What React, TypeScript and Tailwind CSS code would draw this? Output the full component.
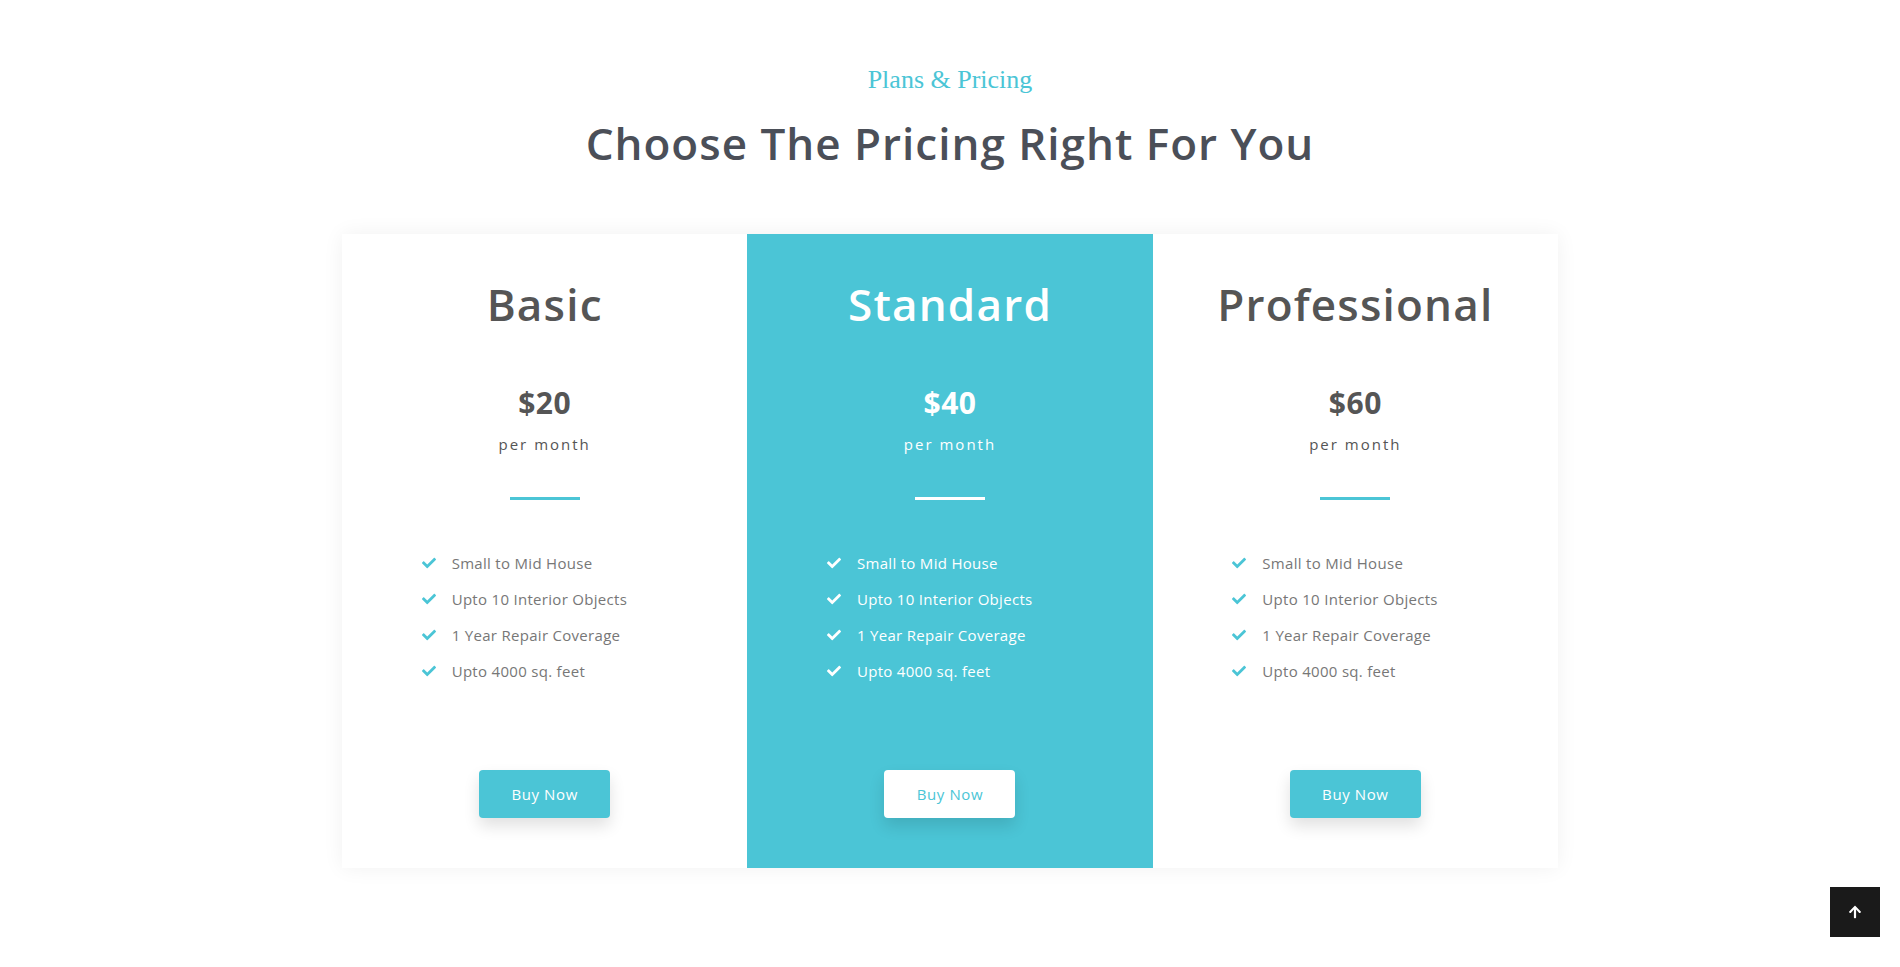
import React from "react";
import { FaCheck, FaArrowUp } from "react-icons/fa";

const features = [
  "Small to Mid House",
  "Upto 10 Interior Objects",
  "1 Year Repair Coverage",
  "Upto 4000 sq. feet",
];

const plans = [
  { name: "Basic", price: "$20", featured: false },
  { name: "Standard", price: "$40", featured: true },
  { name: "Professional", price: "$60", featured: false },
];

const PlanCard = ({ name, price, featured }: { name: string; price: string; featured: boolean }) => {
  return (
    <div
      className={`flex flex-col items-center pt-[44px] pb-[50px] ${
        featured ? "bg-[#4bc5d6] text-white" : "bg-white text-[#555555]"
      }`}
    >
      <h3 className="text-[44px] font-semibold leading-[1.2] tracking-[1.2px]">{name}</h3>
      <div className="mt-[54px] text-[30px] font-bold leading-[1.2] tracking-[0.5px]">{price}</div>
      <div className="mt-[14px] text-[15px] leading-[1.2] tracking-[2px]">per month</div>
      <div className={`mt-[44px] h-[3px] w-[70px] ${featured ? "bg-white" : "bg-[#4bc5d6]"}`} />
      <ul className="mt-[54px] flex w-[246px] flex-col gap-[18px] self-center">
        {features.map((f) => (
          <li key={f} className="flex items-center text-[15px] leading-[18px] tracking-[0.3px]">
            <FaCheck className={`mr-[16px] h-[14px] w-[14px] ${featured ? "text-white" : "text-[#4bc5d6]"}`} />
            <span className={featured ? "text-white" : "text-[#777777]"}>{f}</span>
          </li>
        ))}
      </ul>
      <button
        className={`mt-auto h-[48px] w-[131px] rounded-[4px] text-[15px] tracking-[0.6px] shadow-[0_8px_16px_rgba(0,0,0,0.12)] ${
          featured ? "bg-white text-[#4bc5d6]" : "bg-[#4bc5d6] text-white"
        }`}
      >
        Buy Now
      </button>
    </div>
  );
};

const App = () => {
  return (
    <div className="relative min-h-[967px] w-full bg-white font-['Open_Sans',sans-serif]">
      <div className="flex flex-col items-center pt-[64px]">
        <div className="font-['Liberation_Serif',serif] text-[26px] leading-[1.2] text-[#4bc5d6]">
          Plans &amp; Pricing
        </div>
        <h2 className="mt-[22px] text-[44px] font-semibold leading-[1.2] tracking-[1px] text-[#4b4f58]">
          Choose The Pricing Right For You
        </h2>
        <div className="mt-[64px] grid h-[634px] w-[1216px] grid-cols-3 shadow-[0_0_20px_rgba(0,0,0,0.06)]">
          {plans.map((p) => (
            <PlanCard key={p.name} {...p} />
          ))}
        </div>
      </div>
      <button className="absolute right-[20px] bottom-[30px] flex h-[50px] w-[50px] items-center justify-center bg-[#1a1a1a] text-white">
        <FaArrowUp className="h-[14px] w-[14px]" />
      </button>
    </div>
  );
};

export default App;
